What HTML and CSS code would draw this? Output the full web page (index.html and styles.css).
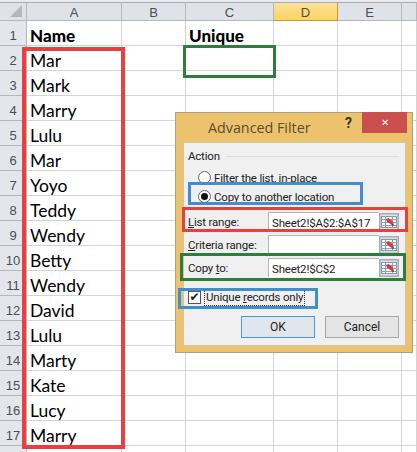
FILE: index.html
```html
<!DOCTYPE html>
<html lang="en">
<head>
    <meta charset="UTF-8">
    <meta name="viewport" content="width=device-width, initial-scale=1.0">
    <title>Advanced Filter</title>
    <link rel="stylesheet" href="styles.css">
</head>
<body>
    <svg width="0" height="0" class="defs">
        <symbol id="range-icon" viewBox="0 0 20 18">
            <rect x="0.75" y="0.75" width="18.5" height="16.5" fill="#dfe2e6" stroke="#a8abb0" stroke-width="1.5"/>
            <rect x="2.5" y="3.5" width="15" height="11" fill="#f7f9fb" stroke="#7d95b0"/>
            <path d="M2 6.500h16M2 9.500h16M2 12.500h16M6.500 3v12M13.500 3v12" stroke="#8aa0b8" fill="none"/>
            <path d="M7 6l2.500-1 4 3 1 2.500-2.500 1-4-3z" fill="#dc3b34"/>
            <path d="M12 11.500l2.500-1 .5 2-1.500.5z" fill="#6a4a4a"/>
        </symbol>
    </svg>

    <div class="sheet">
        <!-- Column headers -->
        <div class="corner"><span class="corner-mark"></span></div>
        <div class="col-head">A</div>
        <div class="col-head">B</div>
        <div class="col-head">C</div>
        <div class="col-head active">D</div>
        <div class="col-head">E</div>
        <div class="col-head"></div>

        <!-- Rows -->
        <div class="row-head">1</div><div class="cell title">Name</div><div class="cell"></div><div class="cell title">Unique</div><div class="cell"></div><div class="cell"></div><div class="cell"></div>
        <div class="row-head">2</div><div class="cell">Mar</div><div class="cell"></div><div class="cell"></div><div class="cell"></div><div class="cell"></div><div class="cell"></div>
        <div class="row-head">3</div><div class="cell">Mark</div><div class="cell"></div><div class="cell"></div><div class="cell"></div><div class="cell"></div><div class="cell"></div>
        <div class="row-head">4</div><div class="cell">Marry</div><div class="cell"></div><div class="cell"></div><div class="cell"></div><div class="cell"></div><div class="cell"></div>
        <div class="row-head">5</div><div class="cell">Lulu</div><div class="cell"></div><div class="cell"></div><div class="cell"></div><div class="cell"></div><div class="cell"></div>
        <div class="row-head">6</div><div class="cell">Mar</div><div class="cell"></div><div class="cell"></div><div class="cell"></div><div class="cell"></div><div class="cell"></div>
        <div class="row-head">7</div><div class="cell">Yoyo</div><div class="cell"></div><div class="cell"></div><div class="cell"></div><div class="cell"></div><div class="cell"></div>
        <div class="row-head">8</div><div class="cell">Teddy</div><div class="cell"></div><div class="cell"></div><div class="cell"></div><div class="cell"></div><div class="cell"></div>
        <div class="row-head">9</div><div class="cell">Wendy</div><div class="cell"></div><div class="cell"></div><div class="cell"></div><div class="cell"></div><div class="cell"></div>
        <div class="row-head">10</div><div class="cell">Betty</div><div class="cell"></div><div class="cell"></div><div class="cell"></div><div class="cell"></div><div class="cell"></div>
        <div class="row-head">11</div><div class="cell">Wendy</div><div class="cell"></div><div class="cell"></div><div class="cell"></div><div class="cell"></div><div class="cell"></div>
        <div class="row-head">12</div><div class="cell">David</div><div class="cell"></div><div class="cell"></div><div class="cell"></div><div class="cell"></div><div class="cell"></div>
        <div class="row-head">13</div><div class="cell">Lulu</div><div class="cell"></div><div class="cell"></div><div class="cell"></div><div class="cell"></div><div class="cell"></div>
        <div class="row-head">14</div><div class="cell">Marty</div><div class="cell"></div><div class="cell"></div><div class="cell"></div><div class="cell"></div><div class="cell"></div>
        <div class="row-head">15</div><div class="cell">Kate</div><div class="cell"></div><div class="cell"></div><div class="cell"></div><div class="cell"></div><div class="cell"></div>
        <div class="row-head">16</div><div class="cell">Lucy</div><div class="cell"></div><div class="cell"></div><div class="cell"></div><div class="cell"></div><div class="cell"></div>
        <div class="row-head">17</div><div class="cell">Marry</div><div class="cell"></div><div class="cell"></div><div class="cell"></div><div class="cell"></div><div class="cell"></div>
        <div class="row-head"></div><div class="cell"></div><div class="cell"></div><div class="cell"></div><div class="cell"></div><div class="cell"></div><div class="cell"></div>
    </div>

    <!-- Advanced Filter dialog -->
    <div class="dialog">
        <div class="dialog-title">
            <span class="dialog-name">Advanced Filter</span>
            <span class="help">?</span>
            <span class="close">&#10005;</span>
        </div>
        <div class="dialog-body">
            <div class="group-label"><span>Action</span><i></i></div>
            <label class="radio-row"><span class="radio"></span><span>Filter the list, in-place</span></label>
            <label class="radio-row"><span class="radio on"></span><span>C<u>o</u>py to another location</span></label>

            <div class="field first">
                <span class="field-label"><u>L</u>ist range:</span>
                <span class="field-input">Sheet2!$A$2:$A$17</span>
                <svg class="range-btn"><use href="#range-icon"/></svg>
            </div>
            <div class="field">
                <span class="field-label"><u>C</u>riteria range:</span>
                <span class="field-input"></span>
                <svg class="range-btn"><use href="#range-icon"/></svg>
            </div>
            <div class="field">
                <span class="field-label">Copy <u>t</u>o:</span>
                <span class="field-input">Sheet2!$C$2</span>
                <svg class="range-btn"><use href="#range-icon"/></svg>
            </div>

            <div class="check-row">
                <span class="check">&#10004;</span>
                <span class="check-text">Unique <u>r</u>ecords only</span>
            </div>

            <div class="buttons">
                <button class="ok">OK</button>
                <button>Cancel</button>
            </div>
        </div>
    </div>

    <!-- Coloured callouts drawn over the screenshot -->
    <div class="mark mark-names"></div>
    <div class="mark mark-target"></div>
    <div class="mark mark-copy"></div>
    <div class="mark mark-list"></div>
    <div class="mark mark-copyto"></div>
    <div class="mark mark-unique"></div>
</body>
</html>
```

FILE: styles.css
```css
/* Global Styles */
html, body {
    margin: 0;
    padding: 0;
}

body {
    position: relative;
    width: 417px;
    height: 452px;
    overflow: hidden;
    background-color: #ffffff;
    font-family: Lato, sans-serif;
    color: #111;
}

.defs {
    position: absolute;
}

/* Worksheet grid */
.sheet {
    display: grid;
    grid-template-columns: 27px 95px 64px 88px 64px 64px 15px;
    grid-template-rows: 19px repeat(18, 25px);
    padding-top: 2px;
    background-color: #e9ebef;
}

.sheet > * {
    min-width: 0;
}

.corner {
    position: relative;
    background-color: #dfe2e8;
    border-top: 1px solid #a9acb2;
    border-right: 1px solid #b4b8be;
    border-bottom: 1px solid #b4b8be;
    box-sizing: border-box;
}

.corner-mark {
    position: absolute;
    right: 4px;
    bottom: 3px;
    border-left: 12px solid transparent;
    border-bottom: 12px solid #b4b8bd;
}

.col-head {
    background-color: #dfe2e8;
    border-top: 1px solid #a9acb2;
    border-right: 1px solid #b4b8be;
    border-bottom: 1px solid #b4b8be;
    font-family: "Liberation Sans", sans-serif;
    font-size: 13px;
    line-height: 19px;
    text-align: center;
    color: #4a4e56;
}

.col-head.active {
    background: linear-gradient(#f8e29a, #fdd45f);
    border-bottom-color: #c29b3c;
    border-right-color: #c29b3c;
}

.row-head {
    background-color: #e3e6eb;
    border-right: 1px solid #b4b8be;
    border-bottom: 1px solid #b4b8be;
    font-family: "Liberation Sans", sans-serif;
    font-size: 13px;
    line-height: 29px;
    text-align: center;
    color: #4a4e56;
}

.cell {
    background-color: #fff;
    border-right: 1px solid #d4d4d4;
    border-bottom: 1px solid #d4d4d4;
    padding-left: 3px;
    font-size: 17.500px;
    line-height: 30px;
    color: #000;
    white-space: nowrap;
}

.cell.title {
    font-weight: 900;
    font-size: 17px;
}

/* Dialog */
.dialog {
    position: absolute;
    left: 175px;
    top: 112px;
    width: 238px;
    height: 241px;
    padding: 0 6px 6px 7px;
    box-sizing: border-box;
    background-color: #ecc36c;
    border: 1px solid #a8a08a;
    font-family: Roboto, sans-serif;
    font-size: 11.500px;
    letter-spacing: -0.2px;
    color: #222;
}

.dialog-title {
    position: relative;
    height: 29px;
}

.dialog-name {
    position: absolute;
    left: 25px;
    top: 5px;
    font-family: "Open Sans", sans-serif;
    font-size: 14.300px;
    letter-spacing: 0;
    color: #5c4d2c;
}

.help {
    position: absolute;
    left: 162px;
    top: 2px;
    font-size: 14px;
    font-weight: bold;
    color: #333;
}

.close {
    position: absolute;
    left: 179px;
    top: -1px;
    width: 45px;
    height: 21px;
    background-color: #c9504f;
    color: #fff;
    font-size: 10px;
    line-height: 21px;
    text-align: center;
}

.dialog-body {
    height: 204px;
    padding: 0 6px 0 4px;
    background-color: #f0f0f0;
    border: 1px solid #cfc6ad;
    box-sizing: border-box;
}

.group-label {
    display: flex;
    align-items: center;
    gap: 6px;
    height: 16px;
    padding-top: 5px;
    box-sizing: content-box;
}

.group-label i {
    flex: 1;
    height: 1px;
    background-color: #dcdcdc;
}

.radio-row {
    display: flex;
    align-items: center;
    gap: 3px;
    height: 19px;
    margin-left: 10px;
}

.group-label + .radio-row {
    margin-top: 4px;
}

.radio {
    position: relative;
    width: 11px;
    height: 11px;
    border: 1px solid #666;
    border-radius: 50%;
    background-color: #fff;
}

.radio.on::after {
    content: "";
    position: absolute;
    left: 2px;
    top: 2px;
    width: 7px;
    height: 7px;
    border-radius: 50%;
    background-color: #111;
}

/* Range fields */
.field {
    display: flex;
    align-items: center;
    height: 23px;
}

.field.first {
    margin-top: 4px;
}

.field-label {
    width: 80px;
    flex: none;
    white-space: nowrap;
}

.field-input {
    width: 111px;
    height: 19px;
    flex: none;
    padding-left: 3px;
    box-sizing: border-box;
    background-color: #fff;
    border-top: 1px solid #b5b5b5;
    border-left: 1px solid #b5b5b5;
    line-height: 20px;
    white-space: nowrap;
}

.range-btn {
    width: 20px;
    height: 18px;
    flex: none;
}

/* Checkbox */
.check-row {
    display: flex;
    align-items: center;
    gap: 3px;
    height: 18px;
    margin-top: 9px;
}

.check {
    width: 11px;
    height: 11px;
    border: 1px solid #555;
    background-color: #fff;
    font-family: "DejaVu Sans", sans-serif;
    font-size: 12px;
    font-weight: bold;
    letter-spacing: 0;
    line-height: 11px;
    text-align: center;
    overflow: hidden;
}

.check-text {
    border: 1px dotted #333;
    padding: 0 1px;
    line-height: 15px;
}

/* Buttons */
.buttons {
    display: flex;
    justify-content: flex-end;
    gap: 10px;
    margin-top: 10px;
}

button {
    width: 74px;
    height: 22px;
    padding: 0;
    background-color: #e4e4e4;
    border: 1px solid #a9a9a9;
    font-family: inherit;
    font-size: 12px;
    color: #222;
}

button.ok {
    background-color: #e1e6ec;
    border-color: #4a9ad8;
}

/* Callouts */
.mark {
    position: absolute;
    box-sizing: border-box;
    border-style: solid;
    border-width: 3px;
}

.mark-names {
    left: 22px;
    top: 47px;
    width: 103px;
    height: 402px;
    border-color: #e8403f;
    border-width: 4px;
}

.mark-target {
    left: 183px;
    top: 45px;
    width: 93px;
    height: 33px;
    border-color: #2f7d3a;
}

.mark-copy {
    left: 188px;
    top: 182px;
    width: 175px;
    height: 23px;
    border-color: #3f8fd0;
}

.mark-list {
    left: 182px;
    top: 207px;
    width: 226px;
    height: 25px;
    border-color: #e8403f;
}

.mark-copyto {
    left: 180px;
    top: 253px;
    width: 226px;
    height: 28px;
    border-color: #2f7d3a;
}

.mark-unique {
    left: 178px;
    top: 288px;
    width: 140px;
    height: 21px;
    border-color: #3f8fd0;
}
```
